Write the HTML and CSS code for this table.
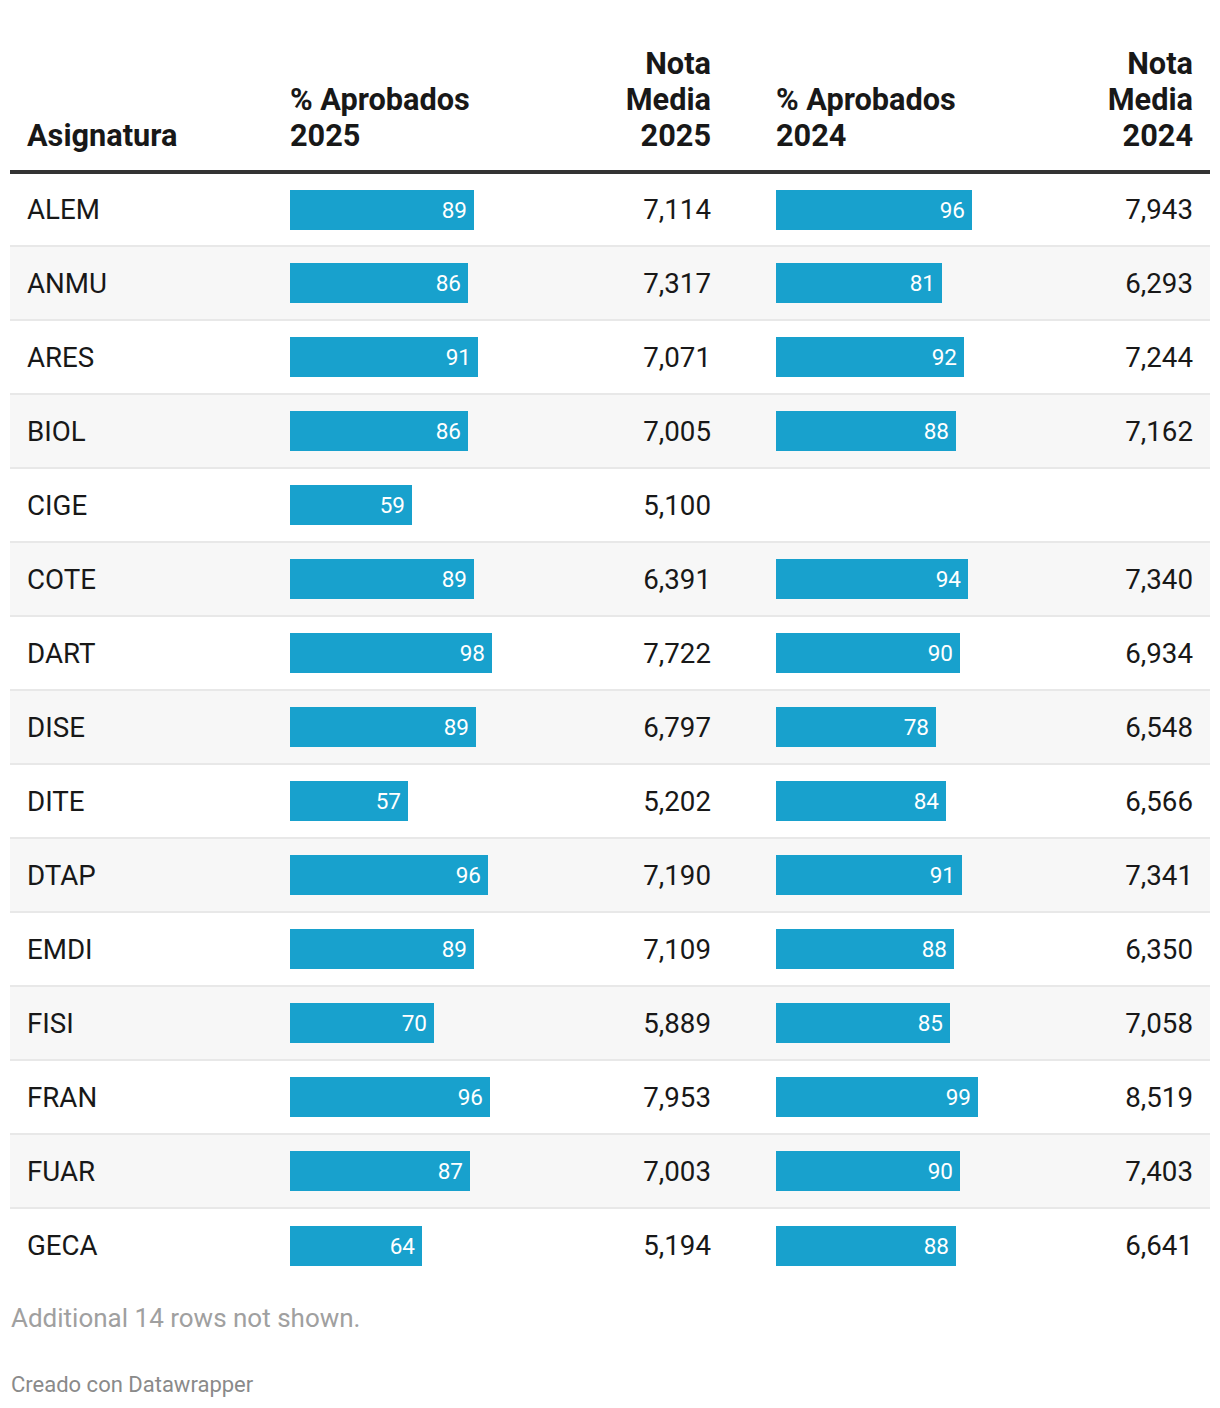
FILE: index.html
```html
<!DOCTYPE html>
<html lang="es">
<head>
<meta charset="utf-8">
<title>Tabla</title>
<link rel="stylesheet" href="styles.css">
</head>
<body>
<div class="chart">
<table class="dw-table">
  <colgroup>
    <col class="c1"><col class="c2"><col class="c3"><col class="c4"><col class="c5">
  </colgroup>
  <thead>
    <tr>
      <th class="left">Asignatura</th>
      <th class="left">% Aprobados<br>2025</th>
      <th class="right">Nota<br>Media<br>2025</th>
      <th class="left pl">% Aprobados<br>2024</th>
      <th class="right">Nota<br>Media<br>2024</th>
    </tr>
  </thead>
  <tbody>
    <tr><td>ALEM</td><td><div class="bar" style="width:184px">89</div></td><td class="num">7,114</td><td class="pl"><div class="bar" style="width:196px">96</div></td><td class="num">7,943</td></tr>
    <tr><td>ANMU</td><td><div class="bar" style="width:178px">86</div></td><td class="num">7,317</td><td class="pl"><div class="bar" style="width:166px">81</div></td><td class="num">6,293</td></tr>
    <tr><td>ARES</td><td><div class="bar" style="width:188px">91</div></td><td class="num">7,071</td><td class="pl"><div class="bar" style="width:188px">92</div></td><td class="num">7,244</td></tr>
    <tr><td>BIOL</td><td><div class="bar" style="width:178px">86</div></td><td class="num">7,005</td><td class="pl"><div class="bar" style="width:180px">88</div></td><td class="num">7,162</td></tr>
    <tr><td>CIGE</td><td><div class="bar" style="width:122px">59</div></td><td class="num">5,100</td><td class="pl"></td><td class="num"></td></tr>
    <tr><td>COTE</td><td><div class="bar" style="width:184px">89</div></td><td class="num">6,391</td><td class="pl"><div class="bar" style="width:192px">94</div></td><td class="num">7,340</td></tr>
    <tr><td>DART</td><td><div class="bar" style="width:202px">98</div></td><td class="num">7,722</td><td class="pl"><div class="bar" style="width:184px">90</div></td><td class="num">6,934</td></tr>
    <tr><td>DISE</td><td><div class="bar" style="width:186px">89</div></td><td class="num">6,797</td><td class="pl"><div class="bar" style="width:160px">78</div></td><td class="num">6,548</td></tr>
    <tr><td>DITE</td><td><div class="bar" style="width:118px">57</div></td><td class="num">5,202</td><td class="pl"><div class="bar" style="width:170px">84</div></td><td class="num">6,566</td></tr>
    <tr><td>DTAP</td><td><div class="bar" style="width:198px">96</div></td><td class="num">7,190</td><td class="pl"><div class="bar" style="width:186px">91</div></td><td class="num">7,341</td></tr>
    <tr><td>EMDI</td><td><div class="bar" style="width:184px">89</div></td><td class="num">7,109</td><td class="pl"><div class="bar" style="width:178px">88</div></td><td class="num">6,350</td></tr>
    <tr><td>FISI</td><td><div class="bar" style="width:144px">70</div></td><td class="num">5,889</td><td class="pl"><div class="bar" style="width:174px">85</div></td><td class="num">7,058</td></tr>
    <tr><td>FRAN</td><td><div class="bar" style="width:200px">96</div></td><td class="num">7,953</td><td class="pl"><div class="bar" style="width:202px">99</div></td><td class="num">8,519</td></tr>
    <tr><td>FUAR</td><td><div class="bar" style="width:180px">87</div></td><td class="num">7,003</td><td class="pl"><div class="bar" style="width:184px">90</div></td><td class="num">7,403</td></tr>
    <tr><td>GECA</td><td><div class="bar" style="width:132px">64</div></td><td class="num">5,194</td><td class="pl"><div class="bar" style="width:180px">88</div></td><td class="num">6,641</td></tr>
  </tbody>
</table>
<p class="note">Additional 14 rows not shown.</p>
<p class="credit">Creado con Datawrapper</p>
</div>
</body>
</html>
```
FILE: styles.css
```css
html, body {
  margin: 0;
  padding: 0;
  background: #ffffff;
}
body {
  font-family: Roboto, "Liberation Sans", sans-serif;
  color: #181818;
}
.chart {
  padding: 0 10px;
}
.dw-table {
  width: 1200px;
  border-collapse: collapse;
  table-layout: fixed;
  margin-top: 46px;
}
.c1 { width: 263px; }
.c2 { width: 230px; }
.c3 { width: 225px; }
.c4 { width: 247px; }
.c5 { width: 235px; }

.dw-table th {
  font-weight: 700;
  font-size: 30.7px;
  line-height: 36px;
  vertical-align: bottom;
  padding: 0 17px 16px 17px;
  border-bottom: 4px solid #333333;
  color: #181818;
}
.dw-table th.left { text-align: left; }
.dw-table th.right { text-align: right; }
.dw-table .pl { padding-left: 48px; }

.dw-table td {
  font-size: 27.7px;
  height: 74px;
  padding: 0 17px;
  vertical-align: middle;
  border-bottom: 2px solid #e8e8e8;
  box-sizing: border-box;
}
.dw-table tbody tr:nth-child(even) td {
  background: #f7f7f7;
}
.dw-table tbody tr:last-child td {
  border-bottom: none;
}
.dw-table td.num {
  text-align: right;
}
.bar {
  height: 40px;
  background: #18a1cd;
  color: #ffffff;
  font-size: 22.5px;
  line-height: 40px;
  text-align: right;
  padding-right: 7px;
  box-sizing: border-box;
}
.note {
  margin: 20px 0 0 1px;
  font-size: 26px;
  line-height: 32px;
  color: #a0a0a0;
}
.credit {
  margin: 37px 0 0 1px;
  font-size: 22px;
  line-height: 28px;
  color: #8a8a8a;
}
```
